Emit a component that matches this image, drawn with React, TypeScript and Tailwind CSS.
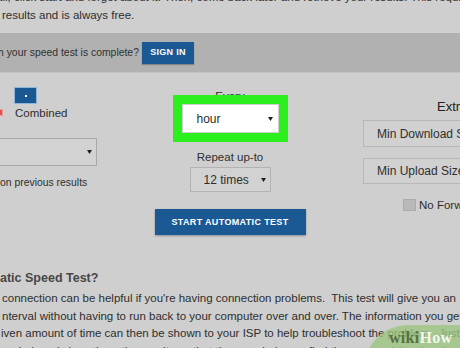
const Caret = () => (
  <svg width="5" height="4" viewBox="0 0 5 4" className="shrink-0">
    <path d="M0 0h5L2.5 4z" fill="#1f1f1f" />
  </svg>
);

const paragraph = [
  "connection can be helpful if you're having connection problems.  This test will give you an",
  "nterval without having to run back to your computer over and over. The information you get",
  "iven amount of time can then be shown to your ISP to help troubleshoot the problem.  Just",
  "period, and show them the results so that they can help you find the cause of the slowdown.",
];

export default function App() {
  return (
    <div className="relative h-[348px] w-[460px] overflow-hidden bg-[#cfcfcf] font-['Liberation_Sans',Arial,sans-serif] text-[#2e2e2e]">
      {/* intro text, cut at the top */}
      <div className="-mt-[11px] whitespace-nowrap text-[11.5px] leading-[17.5px]">
        <div className="-ml-[4px]">
          all, click start and forget about it. Then, come back later and retrieve your results. This requires
        </div>
        <div className="ml-[2px]">results and is always free.</div>
      </div>

      {/* sign-in band */}
      <div className="mt-[9px] flex h-[40px] items-center gap-[3px] border-b border-[#c3c3c3] bg-[#b1b1b1] whitespace-nowrap">
        <span className="-ml-[2px] text-[10.4px] text-[#303030]">n your speed test is complete?</span>
        <button className="flex h-[22px] w-[52px] items-center justify-center bg-[#1b5995] text-[9px] font-bold tracking-[0.3px] text-white shadow-[0_1px_1px_rgba(0,0,0,0.25)]">
          SIGN IN
        </button>
      </div>

      {/* form */}
      <div className="flex text-[11.5px] leading-[14px]">
        <div className="w-[150px] shrink-0 pt-[15px]">
          <div className="flex items-start">
            <span className="-ml-[4px] mt-[21px] h-[7px] w-[7px] border border-[#e99] bg-[#d9534f]" />
            <div className="ml-[12px] flex flex-col">
              <span className="flex h-[15px] w-[21px] items-center justify-center bg-[#1a5893] ring-1 ring-[#8fb3d9]">
                <span className="h-[2px] w-[2px] bg-white" />
              </span>
              <span className="mt-[3px]">Combined</span>
            </div>
          </div>
          <div className="-ml-[10px] mt-[18px] flex h-[28px] w-[107px] items-center justify-end border border-[#a9a9a9] bg-[#d2d2d2] pr-[4px]">
            <Caret />
          </div>
          <div className="mt-[10px] whitespace-nowrap text-[10.4px]">on previous results</div>
        </div>

        <div className="flex w-[160px] shrink-0 flex-col items-center pt-[16px]">
          <span>Every</span>
          <div className="relative z-10 -mt-[8px] border-[9px] border-[#2cf01d]">
            <div className="flex h-[29px] w-[97px] items-center justify-between border border-[#cfcfcf] bg-white pl-[14px] pr-[5px] text-[12px]">
              <span>hour</span>
              <Caret />
            </div>
          </div>
          <span className="mt-[8px]">Repeat up-to</span>
          <div className="mt-[3px] flex h-[25px] w-[81px] items-center justify-between border border-[#b3b3b3] bg-[#d2d2d2] pl-[13px] pr-[4px] text-[12px]">
            <span>12 times</span>
            <Caret />
          </div>
          <button className="mt-[17px] flex h-[26px] w-[151px] items-center justify-center bg-[#1b5995] text-[9px] font-bold tracking-[0.35px] text-white shadow-[0_1px_2px_rgba(0,0,0,0.3)]">
            START AUTOMATIC TEST
          </button>
        </div>

        <div className="flex min-w-0 flex-1 flex-col whitespace-nowrap pt-[26px]">
          <span className="ml-[127px] text-[13px] leading-[16px] text-[#222]">Extra Options</span>
          <div className="ml-[53px] mt-[5px] flex h-[27px] w-[160px] items-center border border-[#b7b7b7] bg-[#d1d1d1] pl-[13px] text-[12px]">
            Min Download Size
          </div>
          <div className="ml-[53px] mt-[11px] flex h-[26px] w-[160px] items-center border border-[#b7b7b7] bg-[#d1d1d1] pl-[13px] text-[12px]">
            Min Upload Size
          </div>
          <div className="ml-[93px] mt-[14px] flex items-center gap-[3px]">
            <span className="h-[12px] w-[13px] shrink-0 border border-[#ababab] bg-[#b9b9b9]" />
            <span>No Forwarding</span>
          </div>
        </div>
      </div>

      {/* explanation */}
      <div className="mt-[35px] whitespace-nowrap text-[12.5px] font-bold leading-[16px] text-[#474747]">
        atic Speed Test?
      </div>
      <div className="mt-[4px] whitespace-pre text-[11.5px] leading-[17.5px] text-[#2e2e2e]">
        {paragraph.map((line, i) => (
          <div key={i} className={i === 2 ? "ml-[1px]" : "ml-[2px]"}>
            {line}
          </div>
        ))}
      </div>

      {/* wikiHow badge */}
      <div className="absolute left-[364px] top-[325px] flex h-[44px] w-[120px] items-start rounded-tl-[44px] bg-[#9cc47f]/80 pl-[25px] pt-[4px]">
        <span className="font-['Liberation_Serif',serif] text-[16px] font-bold leading-[17px] tracking-[0.3px]">
          <span className="text-[#56713f]">wiki</span>
          <span className="text-[#f3f7ee]">How</span>
        </span>
      </div>
    </div>
  );
}
